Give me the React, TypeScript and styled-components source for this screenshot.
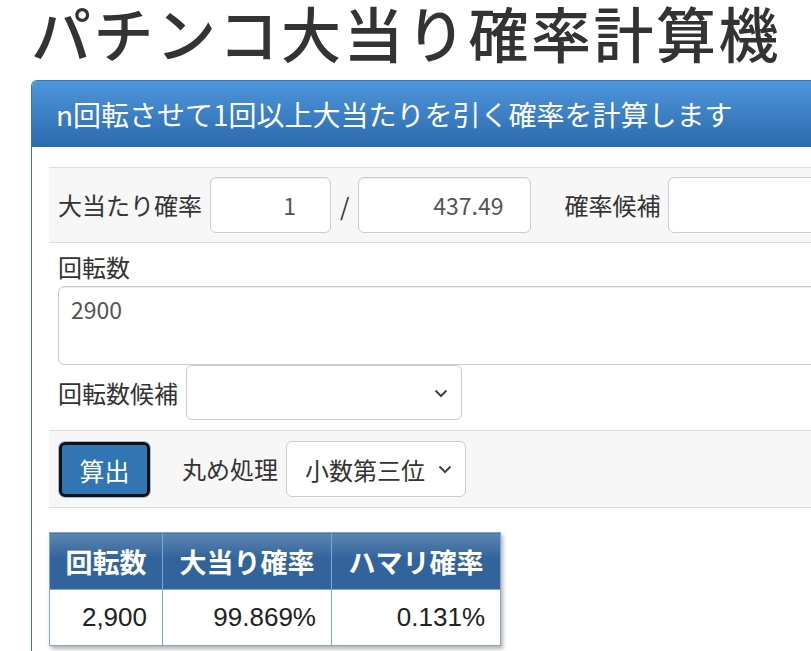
import styled, { createGlobalStyle } from "styled-components";

const GlobalStyle = createGlobalStyle`
  html, body {
    margin: 0;
    padding: 0;
    overflow: hidden;
    background: #fff;
  }
  body {
    font-family: "Noto Sans CJK JP", "Noto Sans", sans-serif;
    color: #333;
  }
  * {
    box-sizing: border-box;
  }
`;

const Page = styled.div`
  width: 811px;
  height: 651px;
  overflow: hidden;
  padding: 0 0 0 31px;
`;

const Title = styled.h1`
  margin: 0 0 16px;
  font-size: 60px;
  font-weight: 500;
  line-height: 64px;
  letter-spacing: 2.5px;
  color: #333;
  white-space: nowrap;
`;

const Panel = styled.section`
  width: 960px;
  border: 1px solid #3477b9;
  border-bottom: none;
  border-radius: 6px 6px 0 0;
`;

const PanelHeader = styled.div`
  height: 66px;
  padding-left: 24px;
  display: flex;
  align-items: center;
  background: linear-gradient(#4f96dc, #2b6aad);
  border-radius: 5px 5px 0 0;
  border-bottom: 1px solid #2d6aa8;
  color: #fff;
  font-size: 28px;
  font-weight: 400;
  white-space: nowrap;
`;

const PanelBody = styled.div`
  padding: 20px 0 40px 17px;
`;

const GrayRow = styled.div`
  display: flex;
  align-items: center;
  background: #f7f7f7;
  border-top: 1px solid #ddd;
  border-bottom: 1px solid #ddd;
  padding: 9px 9px;
  gap: 8px;
`;

const Group = styled.div`
  padding: 0 9px;
`;

const Label = styled.label<{ $ml?: number }>`
  font-size: 24px;
  line-height: 36px;
  color: #333;
  white-space: nowrap;
  margin-left: ${(p) => p.$ml ?? 0}px;
`;

const BlockLabel = styled(Label)`
  display: block;
  margin-top: 6px;
`;

const NumInput = styled.input<{ $w: number; $pr: number }>`
  width: ${(p) => p.$w}px;
  height: 56px;
  border: 1px solid #ccc;
  border-radius: 6px;
  background: #fff;
  box-shadow: inset 0 1px 1px rgba(0, 0, 0, 0.075);
  padding: 0 ${(p) => p.$pr}px 0 12px;
  text-align: right;
  font-family: "Noto Sans CJK JP", sans-serif;
  font-size: 23px;
  color: #555;
  outline: none;
`;

const Slash = styled.span`
  font-size: 24px;
  color: #333;
  margin: 0 1px;
`;

const TextArea = styled.textarea`
  display: block;
  width: 100%;
  height: 79px;
  margin-top: 1px;
  border: 1px solid #ccc;
  border-radius: 6px;
  box-shadow: inset 0 1px 1px rgba(0, 0, 0, 0.075);
  padding: 6px 12px;
  font-family: "Noto Sans CJK JP", sans-serif;
  font-size: 23px;
  line-height: 32px;
  color: #555;
  resize: none;
  outline: none;
`;

const SelectRow = styled.div`
  display: flex;
  align-items: center;
  gap: 8px;
  margin-bottom: 10px;
`;

const SelectWrap = styled.div<{ $w: number; $h: number }>`
  position: relative;
  width: ${(p) => p.$w}px;
  height: ${(p) => p.$h}px;
  flex-shrink: 0;

  svg {
    position: absolute;
    right: 14px;
    top: 50%;
    margin-top: -5px;
    pointer-events: none;
  }
`;

const Select = styled.select`
  appearance: none;
  width: 100%;
  height: 100%;
  border: 1px solid #ccc;
  border-radius: 6px;
  background: #fff;
  padding: 0 36px 0 18px;
  font-family: "Noto Sans CJK JP", sans-serif;
  font-size: 24px;
  color: #333;
  outline: none;
`;

const CalcButton = styled.button`
  width: 93px;
  height: 57px;
  margin-top: 1px;
  border-radius: 7px;
  border: 1px solid #9bbbe0;
  padding: 0;
  background: #fff;
  display: flex;
  align-items: stretch;
  cursor: pointer;
`;

const ButtonFace = styled.span`
  flex: 1;
  border: 3px solid #111;
  border-radius: 6px;
  background: #3175b4;
  color: #fff;
  font-family: "Noto Sans CJK JP", sans-serif;
  font-size: 25px;
  display: flex;
  align-items: center;
  justify-content: center;
`;

const ResultTable = styled.table`
  margin-top: 24px;
  border-collapse: collapse;
  box-shadow: 2px 3px 4px rgba(0, 0, 0, 0.3);
`;

const HeadCell = styled.th<{ $w: number }>`
  width: ${(p) => p.$w}px;
  height: 57px;
  padding: 0 14px;
  background: linear-gradient(#5d85b0, #32639b 45%, #32639b);
  border: 1px solid #7ea7d6;
  color: #fff;
  font-size: 27px;
  font-weight: 700;
  text-align: center;
  white-space: nowrap;
`;

const BodyCell = styled.td`
  height: 56px;
  padding: 0 15px 0 10px;
  background: #fff;
  border: 1px solid #7ea7d6;
  font-family: "Liberation Sans", Arial, sans-serif;
  font-size: 26px;
  color: #222;
  text-align: right;
`;

function Chevron() {
  return (
    <svg width="14" height="10" viewBox="0 0 14 10">
      <path d="M1.5 2.5 L7 8 L12.5 2.5" fill="none" stroke="#444" strokeWidth="2" />
    </svg>
  );
}

export default function App() {
  return (
    <>
      <GlobalStyle />
      <Page>
        <Title>パチンコ大当り確率計算機</Title>
        <Panel>
          <PanelHeader>n回転させて1回以上大当たりを引く確率を計算します</PanelHeader>
          <PanelBody>
            <GrayRow>
              <Label>大当たり確率</Label>
              <NumInput $w={121} $pr={34} defaultValue="1" />
              <Slash>/</Slash>
              <NumInput $w={173} $pr={27} defaultValue="437.49" />
              <Label $ml={25}>確率候補</Label>
              <SelectWrap $w={300} $h={56}>
                <Select defaultValue="">
                  <option value=""></option>
                </Select>
              </SelectWrap>
            </GrayRow>
            <Group>
              <BlockLabel>回転数</BlockLabel>
              <TextArea defaultValue="2900" />
              <SelectRow>
                <Label>回転数候補</Label>
                <SelectWrap $w={276} $h={55}>
                  <Select defaultValue="">
                    <option value=""></option>
                  </Select>
                  <Chevron />
                </SelectWrap>
              </SelectRow>
            </Group>
            <GrayRow>
              <CalcButton>
                <ButtonFace>算出</ButtonFace>
              </CalcButton>
              <Label $ml={23}>丸め処理</Label>
              <SelectWrap $w={180} $h={56}>
                <Select defaultValue="3">
                  <option value="3">小数第三位</option>
                </Select>
                <Chevron />
              </SelectWrap>
            </GrayRow>
            <ResultTable>
              <thead>
                <tr>
                  <HeadCell $w={113}>回転数</HeadCell>
                  <HeadCell $w={169}>大当り確率</HeadCell>
                  <HeadCell $w={169}>ハマリ確率</HeadCell>
                </tr>
              </thead>
              <tbody>
                <tr>
                  <BodyCell>2,900</BodyCell>
                  <BodyCell>99.869%</BodyCell>
                  <BodyCell>0.131%</BodyCell>
                </tr>
              </tbody>
            </ResultTable>
          </PanelBody>
        </Panel>
      </Page>
    </>
  );
}
